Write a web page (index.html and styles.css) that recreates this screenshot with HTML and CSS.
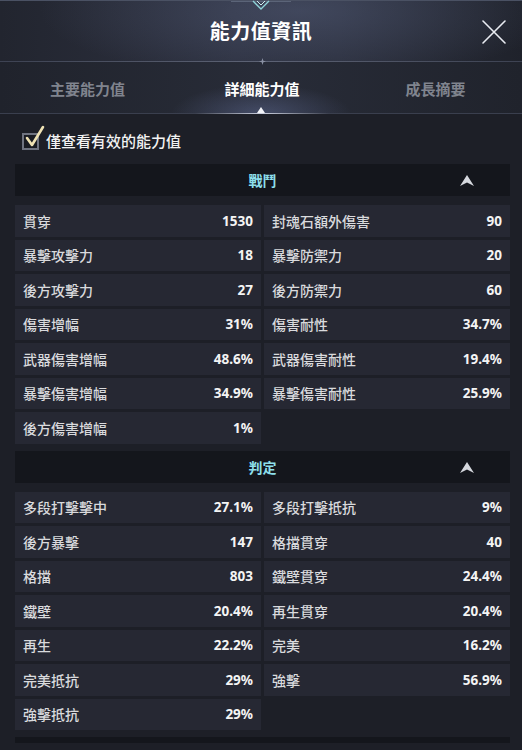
FILE: index.html
```html
<!DOCTYPE html>
<html lang="zh-Hant">
<head>
<meta charset="utf-8">
<title>能力值資訊</title>
<link rel="stylesheet" href="styles.css">
</head>
<body>
<div class="app">
  <header class="top">
    <svg class="crest" width="60" height="14" viewBox="0 0 60 14">
      <path d="M0 1.5 H60" stroke="#5b6478" stroke-width="1"/>
      <path d="M22 1 L30 9 L38 1" fill="none" stroke="#8fd3d8" stroke-width="1.4"/>
      <path d="M26 1 L30 5 L34 1" fill="none" stroke="#cdeff0" stroke-width="1"/>
    </svg>
    <h1 class="title">能力值資訊</h1>
    <svg class="close" width="24" height="24" viewBox="0 0 24 24">
      <path d="M1 1 L23 23 M23 1 L1 23" stroke="#e9ecf2" stroke-width="1.6" stroke-linecap="round"/>
    </svg>
  </header>
  <div class="divider"><span class="spark"></span></div>
  <nav class="tabs">
    <div class="tab">主要能力值</div>
    <div class="tab active">詳細能力值<span class="pointer"></span></div>
    <div class="tab">成長摘要</div>
  </nav>
  <label class="filter">
    <span class="check">
      <svg width="22" height="24" viewBox="0 0 22 24">
        <path d="M4 13 L9 20 L20 2" fill="none" stroke="#efe2b4" stroke-width="2.6" stroke-linejoin="round" stroke-linecap="round"/>
      </svg>
    </span>
    <span class="filter-text">僅查看有效的能力值</span>
  </label>

  <section class="group">
    <div class="group-head">戰鬥
      <svg class="arrow" width="14" height="11" viewBox="0 0 14 11"><path d="M0 11 L7 0 L14 11 L7 7.5 Z" fill="#d5d8de"/></svg>
    </div>
    <div class="grid">
      <div class="cell"><span>貫穿</span><b>1530</b></div>
      <div class="cell"><span>封魂石額外傷害</span><b>90</b></div>
      <div class="cell"><span>暴擊攻擊力</span><b>18</b></div>
      <div class="cell"><span>暴擊防禦力</span><b>20</b></div>
      <div class="cell"><span>後方攻擊力</span><b>27</b></div>
      <div class="cell"><span>後方防禦力</span><b>60</b></div>
      <div class="cell"><span>傷害增幅</span><b>31%</b></div>
      <div class="cell"><span>傷害耐性</span><b>34.7%</b></div>
      <div class="cell"><span>武器傷害增幅</span><b>48.6%</b></div>
      <div class="cell"><span>武器傷害耐性</span><b>19.4%</b></div>
      <div class="cell"><span>暴擊傷害增幅</span><b>34.9%</b></div>
      <div class="cell"><span>暴擊傷害耐性</span><b>25.9%</b></div>
      <div class="cell"><span>後方傷害增幅</span><b>1%</b></div>
    </div>
  </section>

  <section class="group">
    <div class="group-head">判定
      <svg class="arrow" width="14" height="11" viewBox="0 0 14 11"><path d="M0 11 L7 0 L14 11 L7 7.5 Z" fill="#d5d8de"/></svg>
    </div>
    <div class="grid">
      <div class="cell"><span>多段打擊擊中</span><b>27.1%</b></div>
      <div class="cell"><span>多段打擊抵抗</span><b>9%</b></div>
      <div class="cell"><span>後方暴擊</span><b>147</b></div>
      <div class="cell"><span>格擋貫穿</span><b>40</b></div>
      <div class="cell"><span>格擋</span><b>803</b></div>
      <div class="cell"><span>鐵壁貫穿</span><b>24.4%</b></div>
      <div class="cell"><span>鐵壁</span><b>20.4%</b></div>
      <div class="cell"><span>再生貫穿</span><b>20.4%</b></div>
      <div class="cell"><span>再生</span><b>22.2%</b></div>
      <div class="cell"><span>完美</span><b>16.2%</b></div>
      <div class="cell"><span>完美抵抗</span><b>29%</b></div>
      <div class="cell"><span>強擊</span><b>56.9%</b></div>
      <div class="cell"><span>強擊抵抗</span><b>29%</b></div>
    </div>
  </section>
  <div class="next-bar"></div>
</div>
</body>
</html>
```

FILE: styles.css
```css
* { box-sizing: border-box; }
html, body {
  margin: 0;
  padding: 0;
  background: #1d1f27;
  font-family: "Noto Sans", "Noto Sans CJK TC", sans-serif;
  color: #e6e7ea;
}
.app {
  width: 522px;
  height: 750px;
  overflow: hidden;
  background: #1d1f27;
}
.top {
  position: relative;
  height: 61px;
  display: flex;
  align-items: center;
  justify-content: center;
  background:
    radial-gradient(ellipse 260px 70px at 300px 10px, rgba(90,100,130,0.45), rgba(90,100,130,0) 100%),
    linear-gradient(90deg, #22252f 0%, #2d3140 45%, #2b2f3d 65%, #1f222b 100%);
  border-top: 1px solid #4a5163;
}
.crest {
  position: absolute;
  top: -1px;
  left: 231px;
}
.title {
  margin: 0;
  font-size: 20px;
  font-weight: 700;
  color: #ffffff;
  letter-spacing: 0.5px;
  line-height: 1;
  padding-top: 2px;
}
.close {
  position: absolute;
  right: 16px;
  top: 19px;
}
.divider {
  position: relative;
  height: 1px;
  background: linear-gradient(90deg, #3d4252 0%, #5d6375 50%, #3d4252 100%);
}
.spark {
  position: absolute;
  left: 259px;
  top: -3px;
  width: 7px;
  height: 7px;
  background: #8a91a3;
  clip-path: polygon(50% 0, 62% 38%, 100% 50%, 62% 62%, 50% 100%, 38% 62%, 0 50%, 38% 38%);
}
.tabs {
  height: 52px;
  display: grid;
  grid-template-columns: 175px 174px 173px;
  background:
    radial-gradient(ellipse 90px 30px at 261px 52px, rgba(120,135,190,0.35), rgba(120,135,190,0) 100%),
    linear-gradient(90deg, #20232c 0%, #282c38 50%, #20232c 100%);
  border-bottom: 1px solid #3a3f4e;
}
.tab {
  position: relative;
  display: flex;
  align-items: center;
  justify-content: center;
  font-size: 15px;
  font-weight: 700;
  color: #80848e;
  padding-top: 2px;
}
.tab.active {
  color: #ffffff;
}
.tab.active::after {
  content: "";
  position: absolute;
  left: 20px;
  right: 20px;
  bottom: -1px;
  height: 1px;
  background: linear-gradient(90deg, rgba(200,205,225,0), rgba(220,225,240,0.9) 50%, rgba(200,205,225,0));
}
.pointer {
  position: absolute;
  left: 82px;
  bottom: 0;
  width: 0;
  height: 0;
  border-left: 4px solid transparent;
  border-right: 4px solid transparent;
  border-bottom: 6px solid #f3f4f8;
}
.filter {
  display: flex;
  align-items: center;
  height: 28px;
  margin: 12px 0 10px 22px;
}
.check {
  position: relative;
  width: 17px;
  height: 17px;
  border: 2px solid #6f7380;
  background: #191b22;
  margin-top: 3px;
}
.check svg {
  position: absolute;
  left: -1px;
  top: -10px;
}
.filter-text {
  margin-left: 7px;
  font-size: 15px;
  font-weight: 500;
  color: #f2f2f2;
}
.group {
  margin: 0 12px 7px 15px;
}
.group-head {
  position: relative;
  height: 32px;
  display: flex;
  align-items: center;
  justify-content: center;
  background: #14161c;
  color: #8ddfeb;
  font-size: 14px;
  font-weight: 700;
  margin-bottom: 9px;
}
.arrow {
  position: absolute;
  right: 36px;
  top: 11px;
}
.grid {
  display: grid;
  grid-template-columns: 246px 246px;
  grid-auto-rows: 31.5px;
  column-gap: 3px;
  row-gap: 3px;
}
.cell {
  display: flex;
  align-items: center;
  justify-content: space-between;
  padding: 0 8px 0 8px;
  background: #262833;
}
.cell span {
  font-size: 14px;
  font-weight: 500;
  color: #d9dadd;
}
.cell b {
  font-size: 13.5px;
  font-weight: 700;
  color: #f4f4f4;
}
.next-bar {
  margin: 0 12px 0 15px;
  height: 6px;
  background: #14161c;
}
```
